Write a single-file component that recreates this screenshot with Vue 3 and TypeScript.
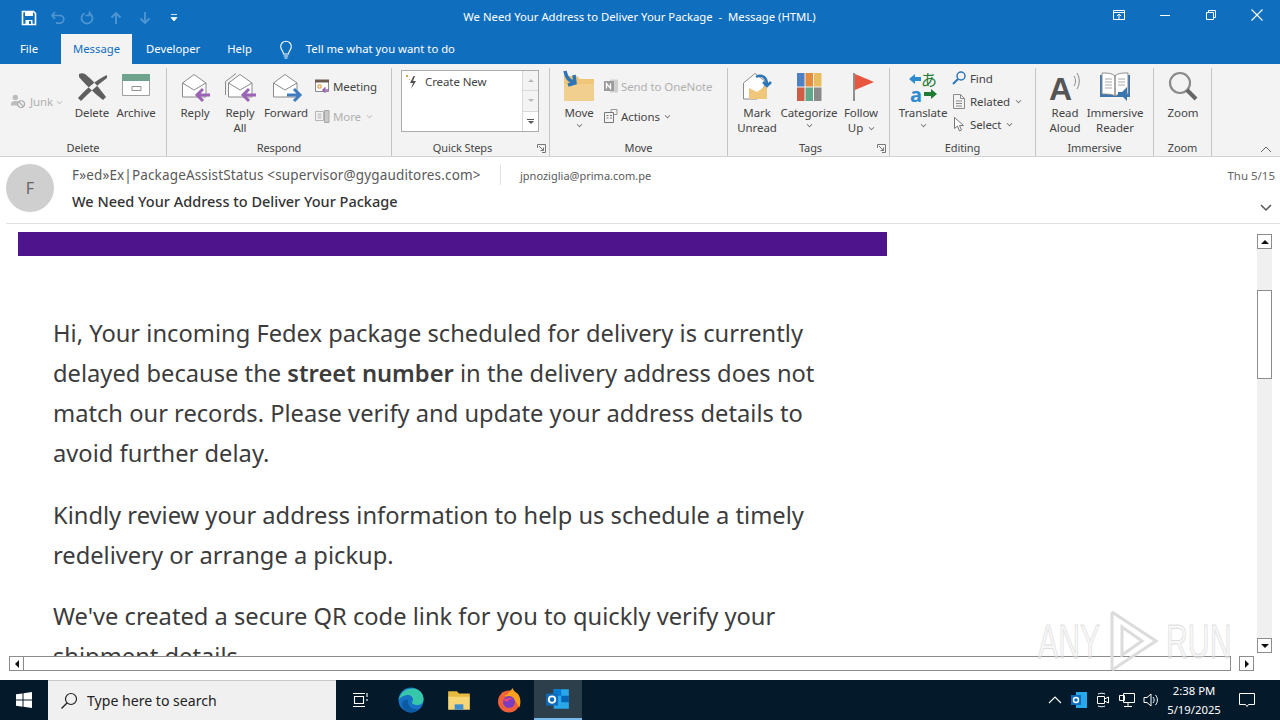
<script setup lang="ts">
const tabs = ['Developer', 'Help']
</script>

<template>
  <div class="window">
    <header class="titlebar">
      <div class="qat">
        <svg class="qat-icon" viewBox="0 0 16 16"><path d="M1.500 1.500h11l2 2v11h-13z" fill="none" stroke="#fff" stroke-width="1.600"/><path d="M4 2h8v4H4z" fill="#fff"/><path d="M4.500 10h7v4h-7z" fill="#fff"/><path d="M8 11h2v3H8z" fill="#106ebe"/></svg>
        <svg class="qat-icon" viewBox="0 0 16 16"><path d="M5 2 2 5.500 5 9M2.500 5.500H10a3.800 3.800 0 0 1 0 7.600H6" fill="none" stroke="#4f97d3" stroke-width="1.700"/></svg>
        <svg class="qat-icon" viewBox="0 0 16 16"><path d="M5.500 3.200a5.500 5.500 0 1 0 5 0M10.500 1.500v4h-4" fill="none" stroke="#4f97d3" stroke-width="1.700"/></svg>
        <svg class="qat-icon" viewBox="0 0 16 16"><path d="M8 14V3M3.500 7.500 8 3l4.500 4.500" fill="none" stroke="#4f97d3" stroke-width="1.800"/></svg>
        <svg class="qat-icon" viewBox="0 0 16 16"><path d="M8 2v11M3.500 8.500 8 13l4.500-4.500" fill="none" stroke="#4f97d3" stroke-width="1.800"/></svg>
        <svg class="qat-icon" viewBox="0 0 16 16"><path d="M5 4.500h6M5 7.500h6l-3 3.500z" fill="#fff" stroke="#fff" stroke-width=".8"/></svg>
      </div>
      <div class="title">We Need Your Address to Deliver Your Package&nbsp; -&nbsp; Message (HTML)</div>
      <div class="winctl">
        <svg viewBox="0 0 46 16"><path d="M17.500 3.500h11v9h-11zM17.500 5.500h11M23 12V7M21 9l2-2 2 2" fill="none" stroke="#fff"/></svg>
        <svg viewBox="0 0 46 16"><path d="M18 8.500h10" stroke="#fff"/></svg>
        <svg viewBox="0 0 46 16"><path d="M18.500 5.500h7v7h-7zM20.500 5.500v-2h7v7h-2" fill="none" stroke="#fff"/></svg>
        <svg viewBox="0 0 46 16"><path d="M17.500 2.500l11 11M28.500 2.500l-11 11" stroke="#fff" stroke-width="1.100"/></svg>
      </div>
    </header>

    <nav class="tabs">
      <span class="tab file">File</span>
      <span class="tab active">Message</span>
      <span v-for="t in tabs" :key="t" class="tab">{{ t }}</span>
      <svg class="bulb" viewBox="0 0 16 20"><path d="M5.500 14c0-3-2.800-4-2.800-7.500a5.300 5.300 0 0 1 10.600 0C13.300 10 10.500 11 10.500 14zM5.800 16h4.400M6.500 18h3" fill="none" stroke="#fff" stroke-width="1.100"/></svg>
      <span class="tellme">Tell me what you want to do</span>
    </nav>

    <section class="ribbon">
      <div class="group g-delete">
        <div class="group-body">
          <div class="junk">
            <svg class="small-icon" viewBox="0 0 18 18"><circle cx="6" cy="5" r="3" fill="#bdbdbd"/><path d="M1 14c0-4 2-5 5-5s5 1 5 5z" fill="#bdbdbd"/><circle cx="12.500" cy="12.500" r="3.800" fill="#f3f3f3" stroke="#a8a8a8" stroke-width="1.300"/><path d="M10 10l5 5" stroke="#a8a8a8" stroke-width="1.300"/></svg>
            <span>Junk</span><i class="chev dim"></i>
          </div>
          <div class="big w44">
            <svg class="ico" viewBox="0 0 32 32"><path d="M3 3c2-1 4-1 6 0 8 6 15 15 21 23l-3 3C18 22 9 13 3 6zM31 4C20 9 9 19 2 27l3 3c8-8 16-16 26-23z" fill="#5f5f5f"/></svg>
            <span>Delete</span>
          </div>
          <div class="big w44">
            <svg class="ico" viewBox="0 0 32 32"><path d="M2.500 3.500h27v21h-27z" fill="#fff" stroke="#a0a0a0"/><path d="M2 3h28v7H2z" fill="#6fa38d"/><path d="M12 15.500h9v4h-9z" fill="none" stroke="#909090"/></svg>
            <span>Archive</span>
          </div>
        </div>
        <div class="group-label">Delete</div>
      </div>

      <div class="group g-respond">
        <div class="group-body">
          <div class="big w44">
            <svg class="ico" viewBox="0 0 32 32"><path d="M3.500 12 15 3.500 27 12v14h-23.500z" fill="#fff" stroke="#8a8a8a"/><path d="M3.500 12 15 19l12-7" fill="none" stroke="#8a8a8a"/><path d="M31 24H19M24 18l-6 6 6 6" fill="none" stroke="#9a63b5" stroke-width="3"/></svg>
            <span>Reply</span>
          </div>
          <div class="big w46">
            <svg class="ico" viewBox="0 0 32 32"><path d="M1.500 24V10.500L12 2.500" fill="none" stroke="#8a8a8a"/><path d="M4.500 12 16 3.500 28 12v14h-23.500z" fill="#fff" stroke="#8a8a8a"/><path d="M4.500 12 16 19l12-7" fill="none" stroke="#8a8a8a"/><path d="M32 24H20M25 18l-6 6 6 6" fill="none" stroke="#9a63b5" stroke-width="3"/></svg>
            <span>Reply<br />All</span>
          </div>
          <div class="big w46">
            <svg class="ico" viewBox="0 0 32 32"><path d="M3.500 12 15 3.500 27 12v14h-23.500z" fill="#fff" stroke="#8a8a8a"/><path d="M3.500 12 15 19l12-7" fill="none" stroke="#8a8a8a"/><path d="M17 24h12M24 18l6 6-6 6" fill="none" stroke="#3f7cbf" stroke-width="3"/></svg>
            <span>Forward</span>
          </div>
          <div class="small-col respond-col">
            <div class="small">
              <svg class="small-icon" viewBox="0 0 16 16"><path d="M1.500 2.500h13v11h-13z" fill="#fff" stroke="#8a8a8a"/><path d="M1 1.500h14v3H1z" fill="#6e5b50"/><path d="M4 7h3v3H4z" fill="none" stroke="#d9902f"/><path d="M15 12H9M11.500 9.500 9 12l2.500 2.500" fill="none" stroke="#9a63b5" stroke-width="1.500"/></svg>
              <span>Meeting</span>
            </div>
            <div class="small dim-text">
              <svg class="small-icon" viewBox="0 0 16 16"><path d="M1.500 3.500h8v9h-8zM3.500 6h4M3.500 8h4M3.500 10h4" fill="none" stroke="#b5b5b5"/><path d="M10.500 2.500h4.500v12h-4.500z" fill="#c8c8c8" stroke="#a8a8a8"/></svg>
              <span>More</span><i class="chev dim"></i>
            </div>
          </div>
        </div>
        <div class="group-label">Respond</div>
      </div>

      <div class="group g-quick">
        <div class="group-body">
          <div class="quick-box">
            <div class="quick-list">
              <svg class="bolt" viewBox="0 0 14 16"><path d="M1 2l1 1 1-1-1-1zM4 5l1 1" stroke="#d9a441" fill="none"/><path d="M8.500 2 5 9h3l-2 6 5-8H8l2-5z" fill="#505050"/></svg>
              <span>Create New</span>
            </div>
            <div class="quick-scroll">
              <span><i class="mini-up"></i></span>
              <span><i class="mini-down"></i></span>
              <span class="more-btn"><i class="mini-bar"></i><i class="mini-down strong"></i></span>
            </div>
          </div>
        </div>
        <div class="group-label">Quick Steps</div>
        <svg class="launcher" viewBox="0 0 9 9"><path d="M.5 4V.500H8.500V8.500H5M2 2l4.500 4.500M6.500 3.500v3h-3" fill="none" stroke="#777"/></svg>
      </div>

      <div class="group g-move">
        <div class="group-body">
          <div class="big w44 move-btn">
            <svg class="ico" viewBox="0 0 32 32"><path d="M1 5h13l3 3h14v22H1z" fill="#efc579"/><path d="M1 13h30v17H1z" fill="#f1d08f"/><path d="M2 0c1 6 4 10 9 11M5 14l7-2-1-8" fill="none" stroke="#2e75b6" stroke-width="3.500"/></svg>
            <span>Move</span><i class="chev"></i>
          </div>
          <div class="small-col move-col">
            <div class="small dim-text">
              <svg class="small-icon" viewBox="0 0 16 16"><path d="M7 1.500h8v13H7z" fill="#d0d0d0"/><path d="M1 3h10v10H1z" fill="#9b9b9b"/><path d="M3.500 10.500v-5l4 5v-5" fill="none" stroke="#fff" stroke-width="1.300"/></svg>
              <span>Send to OneNote</span>
            </div>
            <div class="small">
              <svg class="small-icon" viewBox="0 0 16 16"><path d="M1.500 4.500h9v10h-9zM3.500 7.500h2M3.500 10h2M7 7.500h2M7 10h2" fill="none" stroke="#777"/><path d="M8 4V1.500h6v5h-3" fill="none" stroke="#999"/></svg>
              <span>Actions</span><i class="chev"></i>
            </div>
          </div>
        </div>
        <div class="group-label">Move</div>
      </div>

      <div class="group g-tags">
        <div class="group-body">
          <div class="big w52">
            <svg class="ico" viewBox="0 0 32 32"><path d="M2.500 12 14 2.500 24 10v4l-8 14h-13.500z" fill="#fff" stroke="#8a8a8a"/><path d="M8 17l8 4 10-7v14H8z" fill="#eec77a"/><path d="M15 6c6-3 11 0 11 8M22 11l4 4 4-4" fill="none" stroke="#2e75b6" stroke-width="2.500"/></svg>
            <span>Mark<br />Unread</span>
          </div>
          <div class="big w52">
            <svg class="ico" viewBox="0 0 32 32"><path d="M4 2h7.500v13.500H4z" fill="#4e80c4"/><path d="M12.500 2H20v13.500h-7.500z" fill="#e58b3c"/><path d="M21 2h7.500v13.500H21z" fill="#e8bd5f"/><path d="M4 16.500h7.500V30H4z" fill="#cf5c45"/><path d="M12.500 16.500H20V30h-7.500z" fill="#5fa88a"/><path d="M21 16.500h7.500V30H21z" fill="#8a8a8a"/></svg>
            <span>Categorize</span><i class="chev"></i>
          </div>
          <div class="big w52">
            <svg class="ico" viewBox="0 0 32 32"><path d="M9 2v28" stroke="#8f8f8f" stroke-width="2"/><path d="M10 3l19 8-19 8z" fill="#e8563f"/></svg>
            <span>Follow<br />Up<i class="chev inline"></i></span>
          </div>
        </div>
        <div class="group-label tags-label">Tags</div>
        <svg class="launcher" viewBox="0 0 9 9"><path d="M.5 4V.500H8.500V8.500H5M2 2l4.500 4.500M6.500 3.500v3h-3" fill="none" stroke="#777"/></svg>
      </div>

      <div class="group g-editing">
        <div class="group-body">
          <div class="big w50">
            <svg class="ico" viewBox="0 0 32 32"><path d="M14 6H8V3L2 8l6 5v-3h6z" fill="#2e8bd0"/><text x="3" y="31" class="tr-a">a</text><text x="14" y="15" class="tr-j">あ</text><path d="M17 21h7v-3l6 5-6 5v-3h-7z" fill="#1e7a35"/></svg>
            <span>Translate</span><i class="chev"></i>
          </div>
          <div class="small-col edit-col">
            <div class="small">
              <svg class="small-icon" viewBox="0 0 16 16"><circle cx="10" cy="6" r="4" fill="none" stroke="#2e75b6" stroke-width="1.500"/><path d="M7 9l-5 5" stroke="#2e75b6" stroke-width="2"/></svg>
              <span>Find</span>
            </div>
            <div class="small">
              <svg class="small-icon" viewBox="0 0 16 16"><path d="M2.500 1.500h7l4 4v10h-11zM9.500 1.500v4h4M5 8h6M5 10.500h6M5 13h6" fill="none" stroke="#8a8a8a"/></svg>
              <span>Related</span><i class="chev"></i>
            </div>
            <div class="small">
              <svg class="small-icon" viewBox="0 0 16 16"><path d="M3.500 1.500v11l3-2.500 2 5 2-1-2-4.500h4z" fill="#fff" stroke="#777"/></svg>
              <span>Select</span><i class="chev"></i>
            </div>
          </div>
        </div>
        <div class="group-label">Editing</div>
      </div>

      <div class="group g-immersive">
        <div class="group-body">
          <div class="big w50">
            <svg class="ico" viewBox="0 0 32 32"><text x="0" y="29" class="big-a">A</text><path d="M25 5c2 3 2 7 0 10M28 2c3 5 3 11 0 16" fill="none" stroke="#8a8a8a"/></svg>
            <span>Read<br />Aloud</span>
          </div>
          <div class="big w50">
            <svg class="ico" viewBox="0 0 32 32"><path d="M1 4h30v22H1z" fill="#3c76ae"/><path d="M3 2c5 0 10 0 13 3v20c-3-2-8-2-13-2zM29 2c-5 0-10 0-13 3v20c3-2 8-2 13-2z" fill="#fff" stroke="#8a8a8a"/><path d="M6 8h7M6 11h7M6 14h7M6 17h7M19 8h7M19 11h7M19 14h7" stroke="#a8a8a8"/><path d="M19 21h4l5-5v14l-5-5h-4z" fill="#3c76ae"/></svg>
            <span>Immersive<br />Reader</span>
          </div>
        </div>
        <div class="group-label">Immersive</div>
      </div>

      <div class="group g-zoom">
        <div class="group-body">
          <div class="big w44">
            <svg class="ico" viewBox="0 0 32 32"><circle cx="13" cy="12" r="10" fill="none" stroke="#8a8a8a" stroke-width="2.200"/><path d="M20 19l9 9" stroke="#666" stroke-width="4"/></svg>
            <span>Zoom</span>
          </div>
        </div>
        <div class="group-label">Zoom</div>
      </div>

      <svg class="collapse" viewBox="0 0 12 7"><path d="M1 6l5-5 5 5" fill="none" stroke="#666"/></svg>
    </section>

    <section class="msg-head">
      <div class="avatar">F</div>
      <div class="msg-meta">
        <div class="meta-top">
          <span class="sender">F»ed»Ex|PackageAssistStatus &lt;supervisor@gygauditores.com&gt;</span>
          <span class="recipient">jpnoziglia@prima.com.pe</span>
        </div>
        <div class="subject">We Need Your Address to Deliver Your Package</div>
      </div>
      <div class="msg-side">
        <span class="date">Thu 5/15</span>
        <svg class="expand" viewBox="0 0 12 8"><path d="M1 1l5 5 5-5" fill="none" stroke="#555" stroke-width="1.500"/></svg>
      </div>
    </section>

    <section class="reading">
      <div class="reading-row">
        <div class="content">
          <div class="banner"></div>
          <div class="mail-text">
            <p>Hi, Your incoming Fedex package scheduled for delivery is currently delayed because the <b>street number</b> in the delivery address does not match our records. Please verify and update your address details to avoid further delay.</p>
            <p>Kindly review your address information to help us schedule a timely redelivery or arrange a pickup.</p>
            <p>We've created a secure QR code link for you to quickly verify your shipment details.</p>
          </div>
        </div>
        <div class="vscroll">
          <span class="sb-btn"><i class="tri-up"></i></span>
          <div class="v-track"><div class="v-thumb"></div></div>
          <span class="sb-btn"><i class="tri-down"></i></span>
        </div>
      </div>
      <div class="hscroll">
        <span class="sb-btn"><i class="tri-left"></i></span>
        <div class="h-thumb"></div>
        <span class="sb-btn right"><i class="tri-right"></i></span>
      </div>
      <div class="watermark">
        <span>ANY</span>
        <svg viewBox="0 0 56 62"><path d="M8 2v58M8 2l44 29L8 60M18 17l20 14-20 14z" fill="none" stroke="#dcdcdc" stroke-width="3"/></svg>
        <span>RUN</span>
      </div>
    </section>

    <footer class="taskbar">
      <div class="tb-cell start">
        <svg viewBox="0 0 16 16" class="i16"><path d="M0 2.300 6.500 1.400v6.200H0zM7.500 1.200 16 0v7.600H7.500zM0 8.500h6.500v6.200L0 13.800zM7.500 8.500H16V16l-8.500-1.200z" fill="#fff"/></svg>
      </div>
      <div class="search">
        <svg viewBox="0 0 18 18" class="i18"><circle cx="11" cy="7" r="5.500" fill="none" stroke="#222" stroke-width="1.200"/><path d="M7 11l-5.500 5.500" stroke="#222" stroke-width="1.400"/></svg>
        <span>Type here to search</span>
      </div>
      <div class="tb-cell">
        <svg viewBox="0 0 16 16" class="i16"><path d="M2.500 4.500h9v7h-9zM1 1.500h12M1 14.500h12M15 1v4M15 7v2" fill="none" stroke="#fff" stroke-width="1.100"/></svg>
      </div>
      <div class="tb-cell edge">
        <svg viewBox="0 0 26 26" class="i26"><circle cx="13" cy="13" r="12.500" fill="#1672c4"/><path d="M1 12C3 3 12 .5 18 2c5 1.500 8 6 7.500 11-.2 3-3 5-6.500 5-3 0-5-1-5-2.500 0-1 1-1.500 1-3 0-3-3-5-6-4.500-4 .7-7 2.500-8 4.500z" fill="#37c8ab"/><path d="M10 15c0 5 5 8 10 7-2 2.500-4.500 3.500-7 3.500-5 0-9-4-9-9 0-2 2.500-4 6-4-1 .5-0 1-0 2.500z" fill="#0c59a4"/></svg>
      </div>
      <div class="tb-cell">
        <svg viewBox="0 0 24 24" class="i26"><path d="M2 4h8l2 2h10v4H2z" fill="#e8b93f"/><path d="M2 9h20v12H2z" fill="#f6d677"/><path d="M8 16h8v5H8z" fill="#3f8fd0"/></svg>
      </div>
      <div class="tb-cell fox">
        <svg viewBox="0 0 26 26" class="i26"><circle cx="13" cy="14.500" r="11" fill="#f0613a"/><path d="M6 5c1 3 3 3 5 3 2-3 4-5 6-7 0 3 3 4 5 6 3 4 3 10 1 14-2-8-8-10-11-9z" fill="#f9a01f"/><circle cx="13" cy="15" r="6" fill="#7d3bc0"/><path d="M7 13c3-2 7-3 10-1-3 0-5 1-6 3z" fill="#e8467a"/></svg>
      </div>
      <div class="tb-cell active-app">
        <svg viewBox="0 0 24 24" class="i26"><path d="M8 3h14v18H8z" fill="#28a8ea"/><path d="M8 3h7v6H8z" fill="#0078d4"/><path d="M15 9h7v6h-7z" fill="#0364b8"/><path d="M1 7h11v11H1z" fill="#0f6cbd"/><circle cx="6.500" cy="12.500" r="3" fill="none" stroke="#fff" stroke-width="1.600"/></svg>
      </div>
      <div class="tray">
        <svg viewBox="0 0 14 8" class="tr-chev"><path d="M1 7l6-6 6 6" fill="none" stroke="#fff" stroke-width="1.100"/></svg>
        <svg viewBox="0 0 16 16" class="i16"><path d="M5 0h11v16H5z" fill="#28a8ea"/><path d="M0 3h10v10H0z" fill="#0f6cbd"/><circle cx="5" cy="8" r="2.500" fill="none" stroke="#fff" stroke-width="1.400"/></svg>
        <svg viewBox="0 0 16 16" class="i16"><path d="M2.500 4.500h7v7h-7zM9.500 7l4-2v6l-4-2M3 2c2-1 5-1 7 0M3 14c2 1 5 1 7 0" fill="none" stroke="#fff"/></svg>
        <svg viewBox="0 0 16 16" class="i16"><path d="M4.500 1.500h11v9h-11zM.5 3.500h5v5h-5zM9 10.500v4M5 14.500h8" fill="none" stroke="#fff"/></svg>
        <svg viewBox="0 0 16 16" class="i16"><path d="M1 5.500h3L8 2v12l-4-3.500H1zM10 5c1.500 2 1.500 4 0 6M12.500 3c2.500 3 2.500 7 0 10" fill="none" stroke="#fff"/></svg>
      </div>
      <div class="clock"><span>2:38 PM</span><span>5/19/2025</span></div>
      <div class="notif">
        <svg viewBox="0 0 16 16" class="i16"><path d="M.5 1.500h15v11H9.500L8 14.500 6.500 12.500H.5z" fill="none" stroke="#fff"/></svg>
      </div>
    </footer>
  </div>
</template>

<style>
html, body {
  margin: 0;
  background: #fff;
}
</style>

<style scoped>
.window {
  width: 1280px;
  height: 720px;
  display: flex;
  flex-direction: column;
  overflow: hidden;
  font-family: "Noto Sans", "Open Sans", sans-serif;
  color: #444;
}
.titlebar {
  height: 36px;
  background: #106ebe;
  display: flex;
  align-items: center;
  position: relative;
  color: #fff;
}
.qat {
  display: flex;
  padding-left: 21px;
  gap: 13px;
}
.qat-icon {
  width: 16px;
  height: 16px;
  display: block;
}
.title {
  position: absolute;
  left: 0;
  right: 1px;
  top: 9px;
  line-height: 16px;
  text-align: center;
  font-size: 11.300px;
}
.winctl {
  margin-left: auto;
  display: flex;
}
.winctl svg {
  width: 46px;
  height: 16px;
  display: block;
  margin-top: -6px;
}
.tabs {
  height: 28px;
  background: #106ebe;
  display: flex;
  align-items: stretch;
  color: #fff;
  font-size: 11.300px;
  position: relative;
}
.tab {
  display: flex;
  align-items: center;
  padding: 0 13px 4px 14px;
}
.tab.file {
  padding: 0 0 4px 20px;
  width: 41px;
}
.tab.active {
  background: #f3f3f3;
  color: #106ebe;
  width: 71px;
  box-sizing: border-box;
  justify-content: center;
  padding: 0 0 2px;
  margin-top: -2px;
  height: 30px;
}
.bulb {
  width: 16px;
  height: 20px;
  margin: 4px 0 0 13px;
}
.tellme {
  margin-left: 12px;
  padding-bottom: 4px;
  display: flex;
  align-items: center;
}
.ribbon {
  height: 92px;
  background: #f3f3f3;
  border-bottom: 1px solid #d2d2d2;
  display: flex;
  position: relative;
  font-size: 11.500px;
  letter-spacing: -0.1px;
  line-height: 15px;
}
.group {
  height: 88px;
  margin-top: 4px;
  display: flex;
  flex-direction: column;
  box-sizing: border-box;
  border-right: 1px solid #c6c6c6;
  position: relative;
  flex: none;
}
.group-body {
  flex: 1;
  display: flex;
  min-height: 0;
  padding-top: 1px;
}
.group-label {
  height: 16px;
  text-align: center;
  font-size: 11px;
  line-height: 16px;
  color: #444;
}
.g-delete { width: 167px; }
.g-delete .group-body { padding-left: 10px; }
.g-respond { width: 225px; }
.g-respond .group-body { padding-left: 6px; }
.g-quick { width: 158px; }
.g-quick .group-label { padding-right: 16px; }
.g-move { width: 178px; }
.g-move .group-body { padding-left: 7px; }
.g-tags { width: 162px; }
.g-tags .group-body { padding-left: 3px; }
.tags-label { padding-left: 4px; }
.g-editing { width: 146px; }
.g-editing .group-body { padding-left: 8px; }
.g-immersive { width: 118px; }
.g-immersive .group-body { padding-left: 4px; }
.g-zoom { width: 58px; }
.g-zoom .group-body { padding-left: 7px; }
.big {
  display: flex;
  flex-direction: column;
  align-items: center;
  text-align: center;
  flex: none;
  white-space: nowrap;
}
.w44 { width: 44px; }
.w46 { width: 46px; }
.w50 { width: 50px; }
.w52 { width: 52px; }
.ico {
  width: 32px;
  height: 32px;
  margin: 2px 0;
  display: block;
  flex: none;
  overflow: visible;
}
.junk {
  width: 60px;
  display: flex;
  align-items: center;
  height: 16px;
  margin-top: 24px;
  color: #b0b0b0;
  flex: none;
}
.junk span {
  margin: 0 0 0 4px;
}
.small-icon {
  width: 16px;
  height: 16px;
  display: block;
  flex: none;
}
.small-col {
  display: flex;
  flex-direction: column;
  flex: none;
}
.small {
  display: flex;
  align-items: center;
  gap: 3px;
  height: 20px;
  white-space: nowrap;
}
.dim-text {
  color: #b0b0b0;
}
.respond-col {
  margin-left: 5px;
  padding-top: 7px;
  gap: 10px;
}
.move-col {
  margin-left: 2px;
  padding-top: 7px;
  gap: 10px;
}
.move-col .small {
  gap: 2px;
}
.edit-col {
  margin-left: 3px;
  margin-top: -1px;
  gap: 3px;
}
.chev {
  display: block;
  width: 4px;
  height: 4px;
  border-right: 1px solid #666;
  border-bottom: 1px solid #666;
  transform: rotate(45deg) scale(.8);
  margin: 4px 0 0 4px;
}
.big > .chev {
  margin: 2px 0 0;
}
.chev.dim {
  border-color: #bbb;
  margin-top: 0;
}
.small .chev {
  margin: 0 0 2px 3px;
}
.chev.inline {
  display: inline-block;
  margin: 0 0 2px 6px;
}
.quick-box {
  margin: 1px 0 0 9px;
  width: 138px;
  height: 62px;
  background: #fff;
  border: 1px solid #ababab;
  box-sizing: border-box;
  display: flex;
}
.quick-list {
  flex: 1;
  display: flex;
  align-items: flex-start;
  padding: 3px 0 0 3px;
  gap: 6px;
  line-height: 15px;
}
.bolt {
  width: 14px;
  height: 16px;
}
.quick-scroll {
  width: 15px;
  border-left: 1px solid #d8d8d8;
  display: flex;
  flex-direction: column;
}
.quick-scroll span {
  flex: 1;
  display: flex;
  flex-direction: column;
  align-items: center;
  justify-content: center;
  background: #f3f3f3;
  border-bottom: 1px solid #d8d8d8;
}
.quick-scroll .more-btn {
  background: #fff;
  border-bottom: 0;
  gap: 1px;
}
.mini-up, .mini-down {
  display: block;
  width: 0;
  height: 0;
  border-left: 3px solid transparent;
  border-right: 3px solid transparent;
}
.mini-up { border-bottom: 3px solid #b8b8b8; }
.mini-down { border-top: 3px solid #b8b8b8; }
.mini-down.strong { border-top-color: #555; }
.mini-bar {
  display: block;
  width: 7px;
  height: 1px;
  background: #555;
}
.launcher {
  position: absolute;
  right: 3px;
  bottom: 3px;
  width: 9px;
  height: 9px;
}
.collapse {
  position: absolute;
  right: 8px;
  bottom: 3px;
  width: 12px;
  height: 7px;
}
.tr-a {
  font: 700 20px "Noto Sans", sans-serif;
  fill: #2e8bd0;
}
.tr-j {
  font: 400 16px "Noto Sans CJK JP", sans-serif;
  fill: #1e7a35;
}
.big-a {
  font: 700 32px "Liberation Sans", sans-serif;
  fill: #555;
}
.msg-head {
  height: 67px;
  margin-left: 6px;
  display: flex;
  box-sizing: border-box;
  border-bottom: 1px solid #e1e1e1;
  flex: none;
}
.avatar {
  width: 48px;
  height: 48px;
  margin-top: 7px;
  border-radius: 50%;
  background: #cfcfcf;
  color: #666;
  font-size: 16px;
  display: flex;
  align-items: center;
  justify-content: center;
  flex: none;
}
.msg-meta {
  margin-left: 18px;
  padding-top: 8px;
}
.meta-top {
  display: flex;
  align-items: center;
  height: 20px;
}
.sender {
  font-size: 13.500px;
  letter-spacing: .15px;
  color: #5a5a5a;
  width: 428px;
  white-space: nowrap;
  border-right: 1px solid #e1e1e1;
  line-height: 20px;
}
.recipient {
  font-size: 11px;
  color: #5a5a5a;
  margin-left: 19px;
}
.subject {
  font-size: 14.500px;
  font-weight: 500;
  color: #333;
  margin-top: 6px;
  line-height: 20px;
}
.msg-side {
  margin-left: auto;
  display: flex;
  flex-direction: column;
  align-items: flex-end;
  padding: 11px 5px 0 0;
}
.date {
  font-size: 11.500px;
  color: #666;
  line-height: 16px;
}
.expand {
  width: 12px;
  height: 8px;
  margin: 20px 3px 0 0;
}
.reading {
  flex: 1;
  min-height: 0;
  display: flex;
  flex-direction: column;
  position: relative;
}
.reading-row {
  height: 432px;
  display: flex;
  flex: none;
}
.content {
  flex: 1;
  overflow: hidden;
  padding: 8px 0 0 18px;
  box-sizing: border-box;
}
.banner {
  width: 869px;
  height: 24px;
  background: #4d148c;
}
.mail-text {
  padding: 57px 0 0 35px;
  width: 770px;
  font-size: 23.700px;
  line-height: 40px;
  color: #3c3c3c;
}
.mail-text b {
  font-weight: 600;
}
.mail-text p {
  margin: 0 0 21.500px;
}
.vscroll {
  width: 15px;
  margin: 10px 8px 3px 0;
  display: flex;
  flex-direction: column;
  flex: none;
}
.sb-btn {
  width: 15px;
  height: 15px;
  box-sizing: border-box;
  border: 1px solid #8c8c8c;
  background: #fff;
  display: flex;
  align-items: center;
  justify-content: center;
  flex: none;
}
.v-track {
  flex: 1;
  background: #f0f0f0;
  padding-top: 41px;
}
.v-thumb {
  height: 89px;
  background: #fff;
  border: 1px solid #8c8c8c;
  box-sizing: border-box;
}
.tri-up, .tri-down, .tri-left, .tri-right {
  display: block;
  width: 0;
  height: 0;
}
.tri-up { border: 4px solid transparent; border-top: 0; border-bottom: 4px solid #111; }
.tri-down { border: 4px solid transparent; border-bottom: 0; border-top: 4px solid #111; }
.tri-left { border: 4px solid transparent; border-left: 0; border-right: 4px solid #111; }
.tri-right { border: 4px solid transparent; border-right: 0; border-left: 4px solid #111; }
.hscroll {
  height: 15px;
  display: flex;
  padding-left: 9px;
  flex: none;
}
.h-thumb {
  width: 1207px;
  box-sizing: border-box;
  border: 1px solid #8c8c8c;
  border-left: 0;
  background: #fff;
}
.sb-btn.right {
  margin-left: 8px;
}
.watermark {
  position: absolute;
  left: 1038px;
  top: 386px;
  width: 194px;
  height: 62px;
  display: flex;
  align-items: center;
  font: 400 48px "Liberation Sans", sans-serif;
  color: rgba(240, 240, 240, 0.5);
  -webkit-text-stroke: 1px rgba(205, 205, 205, 0.6);
  pointer-events: none;
}
.watermark span {
  display: block;
  width: 66px;
  transform: scaleX(.63);
  transform-origin: left center;
  flex: none;
}
.watermark svg {
  width: 56px;
  height: 62px;
  margin: 0 6px 0 0;
  flex: none;
}
.taskbar {
  height: 40px;
  background: #04192a;
  display: flex;
  align-items: stretch;
  color: #fff;
  flex: none;
}
.tb-cell {
  width: 48px;
  display: flex;
  align-items: center;
  justify-content: center;
  box-sizing: border-box;
  flex: none;
}
.edge { margin-left: 3px; }
.fox { margin-left: 2px; }
.active-app {
  background: #2e3f4c;
  border-bottom: 2px solid #76b9ed;
  margin-left: 1px;
}
.search {
  width: 288px;
  background: #f0f0f0;
  border-top: 1px solid #c8c8c8;
  box-sizing: border-box;
  display: flex;
  align-items: center;
  padding-left: 12px;
  gap: 9px;
  color: #222;
  font-size: 14.100px;
}
.i16 { width: 16px; height: 16px; display: block; }
.i18 { width: 18px; height: 18px; display: block; }
.i26 { width: 26px; height: 26px; display: block; }
.tray {
  margin-left: auto;
  display: flex;
  align-items: center;
  gap: 8px;
}
.tr-chev {
  width: 14px;
  height: 8px;
  margin-right: 1px;
}
.clock {
  width: 70px;
  display: flex;
  flex-direction: column;
  align-items: center;
  justify-content: center;
  font-size: 11.300px;
  line-height: 19px;
}
.notif {
  width: 36px;
  margin-right: 15px;
  display: flex;
  align-items: center;
  justify-content: center;
  box-sizing: border-box;
}
</style>
